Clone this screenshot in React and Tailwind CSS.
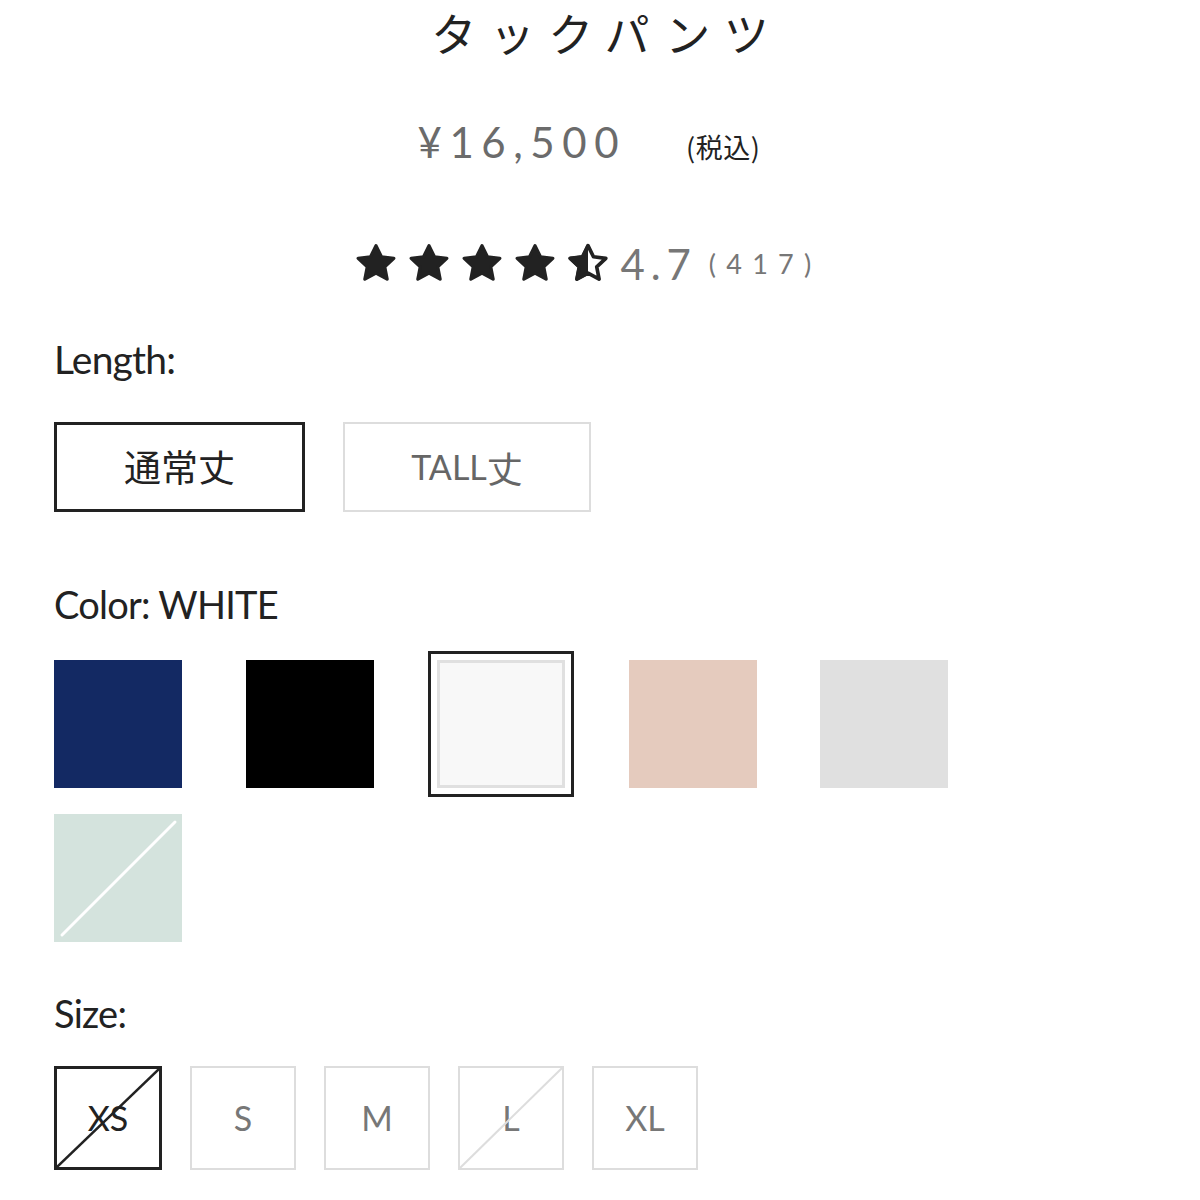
import React from "react";

const STAR = "M12 2.4l2.85 5.85 6.45.8-4.75 4.45 1.25 6.4L12 16.75l-5.8 3.15 1.25-6.4L2.7 9.05l6.45-.8z";

function Star({ half }) {
  return (
    <svg width="46" height="46" viewBox="0 0 24 24" className="block">
      {half ? (
        <>
          <defs>
            <clipPath id="lh">
              <rect x="0" y="0" width="12" height="24" />
            </clipPath>
          </defs>
          <path d={STAR} fill="#222" stroke="#222" strokeWidth="1.7" strokeLinejoin="round" clipPath="url(#lh)" />
          <path d={STAR} fill="none" stroke="#222" strokeWidth="1.9" strokeLinejoin="round" />
        </>
      ) : (
        <path d={STAR} fill="#222" stroke="#222" strokeWidth="1.7" strokeLinejoin="round" />
      )}
    </svg>
  );
}

const latin = { fontFamily: '"Lato", "Noto Sans CJK JP", sans-serif' };
const jp = { fontFamily: '"Noto Sans CJK JP", sans-serif' };

function Diag({ color, width = 2 }) {
  return (
    <svg className="absolute inset-0 w-full h-full" viewBox="0 0 100 100" preserveAspectRatio="none">
      <line x1="100" y1="0" x2="0" y2="100" stroke={color} strokeWidth={width} vectorEffect="non-scaling-stroke" />
    </svg>
  );
}

export default function App() {
  return (
    <div className="w-[1200px] h-[1200px] bg-white text-[#222] overflow-hidden" style={latin}>
      {/* Title */}
      <div className="flex justify-center pt-[3px]">
        <h1 className="text-[45px] leading-[60px] tracking-[0.3em] pl-[0.3em] font-normal text-[#222]" style={jp}>
          タックパンツ
        </h1>
      </div>

      {/* Price */}
      <div className="flex justify-center items-baseline mt-[54px] pr-[22px]">
        <span className="text-[42px] leading-[50px] tracking-[0.18em] text-[#6b6b6b]" style={{ fontFamily: '"Lato", sans-serif' }}>
          ¥16,500
        </span>
        <span className="ml-[60px] text-[27px] tracking-[0.02em] text-[#222]" style={jp}>
          (税込)
        </span>
      </div>

      {/* Rating */}
      <div className="flex justify-center items-center mt-[73px] pr-[26px]">
        <div className="flex gap-[7px]">
          <Star />
          <Star />
          <Star />
          <Star />
          <Star half />
        </div>
        <span className="ml-[10px] text-[42px] leading-[42px] tracking-[0.14em] text-[#777]">4.7</span>
        <span className="ml-[12px] text-[27px] leading-[42px] tracking-[0.38em] text-[#777]">(417)</span>
      </div>

      <div className="px-[54px]">
        {/* Length */}
        <div className="mt-[45px] text-[39px] leading-[54px] tracking-[-0.02em] text-[#222]">Length:</div>
        <div className="flex gap-[38px] mt-[36px]">
          <div
            className="w-[251px] h-[90px] border-[3px] border-[#222] flex items-center justify-center text-[37px] text-[#222]"
            style={jp}
          >
            通常丈
          </div>
          <div className="w-[248px] h-[90px] border-2 border-[#ddd] flex items-center justify-center text-[34px] text-[#666]">
            TALL<span className="text-[36px]" style={jp}>丈</span>
          </div>
        </div>

        {/* Color */}
        <div className="mt-[65px] text-[38px] leading-[54px] tracking-[-0.02em] text-[#222]">Color: WHITE</div>
        <div className="grid grid-cols-[repeat(5,128px)] gap-x-[63.5px] gap-y-[26px] mt-[29px]">
          <div className="w-[128px] h-[128px] bg-[#132963]" />
          <div className="w-[128px] h-[128px] bg-black" />
          <div className="w-[128px] h-[128px] relative">
            <div className="absolute -inset-[9px] border-[3px] border-[#222]" />
            <div className="w-full h-full bg-[#f8f8f8] border-[3px] border-[#e0e0e0]" />
          </div>
          <div className="w-[128px] h-[128px] bg-[#e5cbbe]" />
          <div className="w-[128px] h-[128px] bg-[#e0e0e0]" />
          <div className="w-[128px] h-[128px] bg-[#d4e3dd] relative">
            <svg className="absolute inset-0" width="128" height="128" viewBox="0 0 128 128">
              <line x1="121" y1="8" x2="8" y2="121" stroke="#fff" strokeWidth="3" strokeLinecap="round" />
            </svg>
          </div>
        </div>

        {/* Size */}
        <div className="mt-[44px] text-[38px] leading-[54px] tracking-[-0.02em] text-[#222]">Size:</div>
        <div className="flex gap-[28px] mt-[26px]">
          <div className="relative w-[108px] h-[104px] border-[3px] border-[#222] flex items-center justify-center text-[34px] text-[#222]">
            XS
            <Diag color="#222" width={2.5} />
          </div>
          {["S", "M", "L", "XL"].map((s) => (
            <div
              key={s}
              className="relative w-[106px] h-[104px] border-2 border-[#ddd] flex items-center justify-center text-[34px] text-[#777]"
            >
              {s}
              {s === "L" && <Diag color="#ddd" width={2} />}
            </div>
          ))}
        </div>
      </div>
    </div>
  );
}
